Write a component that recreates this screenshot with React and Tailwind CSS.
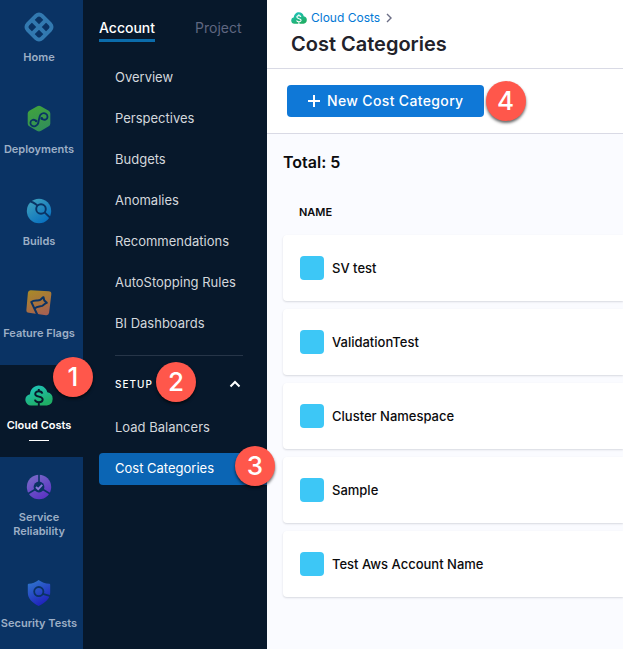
import React from "react";

function HomeIcon() {
  return (
    <svg width="32" height="32" viewBox="0 0 32 32" aria-hidden="true">
      <g transform="rotate(45 16 16)" fill="none" stroke="#3279b0" strokeWidth="4">
        <rect x="6" y="6" width="20" height="20" rx="4" />
        <path d="M16 6v20M6 16h20" />
      </g>
    </svg>
  );
}

function DeploymentsIcon() {
  return (
    <svg width="28" height="28" viewBox="0 0 28 28" aria-hidden="true">
      <defs>
        <linearGradient id="deploy" x1="0" y1="0" x2="0.4" y2="1">
          <stop offset="0" stopColor="#42a53a" />
          <stop offset="1" stopColor="#328f58" />
        </linearGradient>
      </defs>
      <path d="M12.300 1.200a3.400 3.400 0 0 1 3.400 0l8 4.500a3.200 3.200 0 0 1 1.600 2.800v10a3.200 3.200 0 0 1-1.600 2.800l-8 4.800a3.400 3.400 0 0 1-3.400 0l-8-4.800a3.200 3.200 0 0 1-1.600-2.800v-10a3.200 3.200 0 0 1 1.600-2.800z" fill="url(#deploy)" />
      <path d="M11.400 16.200C8.600 13.400 5.300 15.200 5.400 18c.1 2.600 2.600 3.900 4.900 3.100 3.700-1.300 3-3.700 3.600-6.300.6-2.700.4-5.300 3.300-6.300 2.600-.9 5.200.5 5.300 3.100.1 2.900-3.500 4.300-6 1.800" fill="none" stroke="#0a3364" strokeWidth="1.800" />
      <circle cx="11.200" cy="16" r="1.300" fill="#0a3364" />
      <circle cx="16.700" cy="13.400" r="1.300" fill="#0a3364" />
    </svg>
  );
}

function BuildsIcon() {
  return (
    <svg width="26" height="26" viewBox="0 0 26 26" aria-hidden="true">
      <defs>
        <linearGradient id="builds" x1="0" y1="0" x2="0.7" y2="1">
          <stop offset="0" stopColor="#44a5bd" />
          <stop offset="1" stopColor="#0870bf" />
        </linearGradient>
      </defs>
      <circle cx="13" cy="13" r="12.200" fill="url(#builds)" />
      <circle cx="15" cy="11" r="4.800" fill="none" stroke="#0a3364" strokeWidth="1.900" />
      <path d="M2.500 3.200c4 .2 6.500 2 9 4.400M18.600 14.400l5.600 5.400" fill="none" stroke="#0a3364" strokeWidth="1.900" />
    </svg>
  );
}

function FlagsIcon() {
  return (
    <svg width="28" height="28" viewBox="0 0 28 28" aria-hidden="true">
      <defs>
        <linearGradient id="flags" x1="0.200" y1="0" x2="0.600" y2="1">
          <stop offset="0" stopColor="#a98928" />
          <stop offset="1" stopColor="#a66151" />
        </linearGradient>
      </defs>
      <path d="M5.800 1.200l17.800 1.100a2.800 2.800 0 0 1 2.700 3.200l-2.200 18.300a2.800 2.800 0 0 1-3.200 2.400L3.900 23.800a2.800 2.800 0 0 1-2.500-3.100l1.500-17a2.800 2.800 0 0 1 2.900-2.500z" fill="url(#flags)" />
      <path d="M12.700 26.500L6.300 13c2.600-2.400 5.200-1.200 7.800-1.700 1.900-.4 2.700-2.400 4.400-3.100l.8 3.200 2.500 2.300c-2.300.5-2.600 2.400-4.600 3.200-2.700 1-5 .1-7.200 2.400" fill="none" stroke="#0a3364" strokeWidth="2" strokeLinejoin="round" />
    </svg>
  );
}

function CloudIcon({ id, size, ink }) {
  return (
    <svg width={size} height={size * 0.75} viewBox="0 0 28 21" aria-hidden="true">
      <defs>
        <linearGradient id={id} x1="0" y1="0" x2="0.500" y2="1">
          <stop offset="0" stopColor="#1fc6c4" />
          <stop offset="1" stopColor="#1fae66" />
        </linearGradient>
      </defs>
      <path d="M6 20.500a5.700 5.700 0 0 1-1-11.300C5.300 4.200 9.200.5 13.800.5c4.200 0 7.600 2.800 8.500 6.800a6.700 6.700 0 0 1-.4 13.200z" fill={`url(#${id})`} />
      <path d="M17.300 8.600c-.3-1.500-1.700-2.300-3.600-2.300-2 0-3.500.9-3.500 2.600 0 3.900 7.500 1.600 7.500 5.600 0 1.800-1.700 2.700-3.800 2.700-2.200 0-3.700-.9-4-2.600M13.800 4v2.500M13.800 17v4" fill="none" stroke={ink} strokeWidth="1.900" />
    </svg>
  );
}

function ReliabilityIcon() {
  return (
    <svg width="26" height="26" viewBox="0 0 26 26" aria-hidden="true">
      <defs>
        <linearGradient id="reliability" x1="0" y1="0" x2="0.600" y2="1">
          <stop offset="0" stopColor="#7b6fc8" />
          <stop offset="1" stopColor="#5c35c4" />
        </linearGradient>
      </defs>
      <circle cx="13" cy="13" r="12.200" fill="url(#reliability)" />
      <path d="M13 0v8M9 15.500l-7 4.200M17 15.500l7 4.200" stroke="#0a3364" strokeWidth="1.600" />
      <circle cx="13" cy="13" r="5.400" fill="#0a3364" />
      <path d="M10 13l2.200 2.200 4-4.400" fill="none" stroke="#8a78dc" strokeWidth="1.900" />
    </svg>
  );
}

function ShieldIcon() {
  return (
    <svg width="26" height="28" viewBox="0 0 26 28" aria-hidden="true">
      <defs>
        <linearGradient id="shield" x1="0.100" y1="0" x2="0.600" y2="1">
          <stop offset="0" stopColor="#2f78cc" />
          <stop offset="1" stopColor="#2020bd" />
        </linearGradient>
      </defs>
      <path d="M12.600 1c3.200 2.500 6.700 3.600 10.800 3.800.5 0 .8.400.8.900v7.800c0 6-4.600 10.200-11.600 13.500C6 23.700 1.800 19.500 1.800 13.500V5.700c0-.5.300-.9.800-.9C6.400 4.600 9.600 3.500 12.600 1z" fill="url(#shield)" />
      <circle cx="12.800" cy="12.600" r="4.600" fill="none" stroke="#0a3364" strokeWidth="1.800" />
      <path d="M16.800 14.900l7.700 2.200" stroke="#0a3364" strokeWidth="1.800" />
    </svg>
  );
}

const modules = [
  { label: "Home", icon: <HomeIcon /> },
  { label: "Deployments", icon: <DeploymentsIcon /> },
  { label: "Builds", icon: <BuildsIcon /> },
  { label: "Feature Flags", icon: <FlagsIcon /> },
  { label: "Cloud Costs", icon: <CloudIcon id="cloud-nav" size={28} ink="#07182b" />, active: true, step: 1 },
  { label: "Service Reliability", icon: <ReliabilityIcon /> },
  { label: "Security Tests", icon: <ShieldIcon /> },
];

const links = [
  "Overview",
  "Perspectives",
  "Budgets",
  "Anomalies",
  "Recommendations",
  "AutoStopping Rules",
  "BI Dashboards",
];

const categories = [
  "SV test",
  "ValidationTest",
  "Cluster Namespace",
  "Sample",
  "Test Aws Account Name",
];

function Step({ n, className }) {
  return (
    <span
      className={`absolute z-10 flex size-10 items-center justify-center rounded-full bg-[#ff574b] text-[26px] leading-none font-medium text-white shadow-[0_2px_3px_rgba(0,0,0,0.6)] ${className}`}
    >
      {n}
    </span>
  );
}

function ModuleNav() {
  return (
    <nav aria-label="Modules" className="w-[83px] shrink-0 bg-[#0a3364]">
      <ul className="-mt-[3px]">
        {modules.map((m) => (
          <li key={m.label} className="relative">
            <a
              href="#"
              className={`relative flex min-h-[92px] flex-col items-center pt-3.5 pr-[5px] pb-[25px] text-center text-[11px] leading-[14px] font-semibold ${
                m.active ? "bg-[#07182b] text-white" : "text-[#9dafc6]"
              }`}
            >
              <span className="flex h-8 items-center">{m.icon}</span>
              <span className="mt-[7px]">{m.label}</span>
              {m.active && <span className="absolute bottom-4 left-[29px] h-px w-5 bg-white" />}
            </a>
            {m.step && <Step n={m.step} className="-top-2 left-[53px]" />}
          </li>
        ))}
      </ul>
    </nav>
  );
}

function SideNav() {
  return (
    <nav aria-label="Cloud Costs" className="w-[184px] shrink-0 bg-[#07182b] px-4 pt-4 text-[13px] text-[#d3d7dc]">
      <div className="flex gap-10 text-sm leading-[23px]">
        <a href="#" className="border-b-3 border-[#0b6cab] font-medium text-white">Account</a>
        <a href="#" className="text-[#5f6680]">Project</a>
      </div>
      <ul className="mt-5 flex flex-col gap-[9px]">
        {links.map((l) => (
          <li key={l}>
            <a href="#" className="flex h-8 items-center pl-4 whitespace-nowrap">{l}</a>
          </li>
        ))}
      </ul>
      <div className="mt-[15px] mr-2 ml-4 border-t border-[#263548]" />
      <div className="relative mt-3 px-4">
        <button type="button" className="flex h-8 w-full items-center justify-between text-[10px] font-medium tracking-widest text-white">
          SETUP
          <svg width="12" height="8" viewBox="0 0 12 8" className="-mr-1.5" aria-hidden="true">
            <path d="M1.500 6.500L6 2l4.500 4.500" fill="none" stroke="#fff" strokeWidth="2" />
          </svg>
        </button>
        <Step n={2} className="-top-1.5 left-[57px]" />
      </div>
      <ul className="mt-3 flex flex-col gap-[9px]">
        <li>
          <a href="#" className="flex h-8 items-center pl-4">Load Balancers</a>
        </li>
        <li className="relative -mr-4">
          <a href="#" className="flex h-8 items-center rounded-l-sm bg-[#0b65b4] px-4 text-white">Cost Categories</a>
          <Step n={3} className="-top-[7px] -right-2" />
        </li>
      </ul>
    </nav>
  );
}

export default function App() {
  return (
    <div className="flex min-h-screen overflow-hidden bg-[#fafbff] font-['Inter',sans-serif]">
      <ModuleNav />
      <SideNav />
      <main className="min-w-0 flex-1 text-[#0b0b0d]">
        <header className="border-b border-[#d9dae5] bg-white px-6 pt-2 pb-2">
          <div className="flex h-5 items-center text-xs text-[#0278d5]">
            <CloudIcon id="cloud-crumb" size={16} ink="#ffffff" />
            <a href="#" className="ml-1">Cloud Costs</a>
            <svg width="6" height="10" viewBox="0 0 6 10" className="ml-1.5" aria-hidden="true">
              <path d="M1 1l4 4-4 4" fill="none" stroke="#6b6d85" strokeWidth="1.400" />
            </svg>
          </div>
          <h1 className="text-xl leading-8 font-semibold text-[#22222a]">Cost Categories</h1>
        </header>
        <div className="border-b border-[#d9dae5] bg-white px-5 py-4">
          <div className="relative w-fit">
            <button type="button" className="flex h-8 items-center gap-1.5 rounded-sm bg-[#0f78d7] px-5 text-sm font-medium tracking-wide text-white">
              <svg width="14" height="14" viewBox="0 0 14 14" aria-hidden="true">
                <path d="M7 1v12M1 7h12" stroke="#fff" strokeWidth="2" />
              </svg>
              New Cost Category
            </button>
            <Step n={4} className="-top-1 -right-[42px]" />
          </div>
        </div>
        <section className="pt-4 pl-4">
          <h2 className="text-base leading-6 font-semibold">Total: 5</h2>
          <table className="mt-4 w-full border-separate border-spacing-x-0 border-spacing-y-2">
            <thead>
              <tr>
                <th className="h-[29px] px-4 text-left text-[11px] font-semibold">NAME</th>
              </tr>
            </thead>
            <tbody className="text-[13px] leading-[22px] font-medium">
              {categories.map((c) => (
                <tr key={c}>
                  <td className="h-[66px] rounded-l bg-white px-[17px] shadow-[0_1px_2px_rgba(40,41,61,0.16)]">
                    <div className="flex items-center gap-2">
                      <span className="size-6 rounded bg-[#3dc7f6]" />
                      {c}
                    </div>
                  </td>
                </tr>
              ))}
            </tbody>
          </table>
        </section>
      </main>
    </div>
  );
}
